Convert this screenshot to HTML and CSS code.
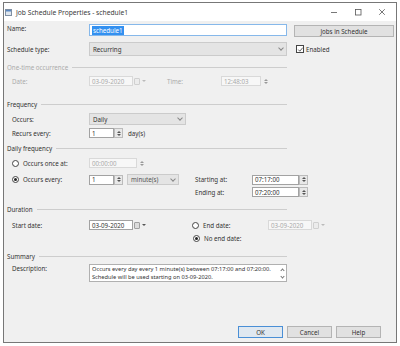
FILE: index.html
```html
<!DOCTYPE html>
<html lang="en">
<head>
    <meta charset="UTF-8">
    <title>Job Schedule Properties - schedule1</title>
    <link rel="stylesheet" href="styles.css">
</head>
<body>
    <div class="window">
        <div class="titlebar">
            <svg class="app-icon" width="7" height="7" viewBox="0 0 7 7">
                <rect x="0.5" y="0.5" width="6" height="6" fill="#dfe6ee" stroke="#7f8fa3"/>
                <rect x="1" y="1" width="5" height="1.5" fill="#5b87c0"/>
            </svg>
            <span class="title">Job Schedule Properties - schedule1</span>
            <div class="controls">
                <span class="ctl"><svg width="8" height="8" viewBox="0 0 8 8"><path d="M1 4.5h6" stroke="#555" stroke-width="0.8"/></svg></span>
                <span class="ctl"><svg width="8" height="8" viewBox="0 0 8 8"><rect x="1.5" y="1.5" width="5.5" height="5.5" fill="none" stroke="#555" stroke-width="0.8"/></svg></span>
                <span class="ctl"><svg width="8" height="8" viewBox="0 0 8 8"><path d="M1.2 1.2l5.6 5.6M6.8 1.2l-5.6 5.6" stroke="#555" stroke-width="0.8"/></svg></span>
            </div>
        </div>

        <div class="content">
            <div class="row r-name">
                <span class="lbl">Name:</span>
                <div class="tb name-box"><span class="selected">schedule1</span></div>
                <button class="btn jobs-btn">Jobs in Schedule</button>
            </div>

            <div class="row r-type">
                <span class="lbl">Schedule type:</span>
                <div class="combo type-combo">Recurring<span class="chev"></span></div>
                <span class="check"><svg width="7" height="7" viewBox="0 0 7 7"><path d="M1.3 3.6l1.5 1.6 3-3.6" fill="none" stroke="#333" stroke-width="0.8"/></svg></span>
                <span>Enabled</span>
            </div>

            <!-- One-time occurrence (disabled) -->
            <div class="head h-once off">One-time occurrence<span class="rule"></span></div>
            <div class="row ind r-date off">
                <span class="lbl">Date:</span>
                <div class="datepick">
                    <div class="tb dis date-box">03-09-2020</div>
                    <span class="cal"></span><span class="tri"></span>
                </div>
                <span class="time-lbl">Time:</span>
                <div class="tb dis time-box">12:48:03</div>
                <span class="spin flat"></span>
            </div>

            <!-- Frequency -->
            <div class="head h-freq">Frequency<span class="rule"></span></div>
            <div class="row ind r-occurs">
                <span class="lbl">Occurs:</span>
                <div class="combo occurs-combo">Daily<span class="chev"></span></div>
            </div>
            <div class="row ind r-recurs">
                <span class="lbl">Recurs every:</span>
                <div class="tb num-box">1</div><span class="spin"></span>
                <span class="unit">day(s)</span>
            </div>

            <!-- Daily frequency -->
            <div class="head h-daily">Daily frequency<span class="rule"></span></div>
            <div class="row ind r-once">
                <span class="lbl"><span class="radio"></span>Occurs once at:</span>
                <div class="tb dis once-box">00:00:00</div>
                <span class="spin flat"></span>
            </div>
            <div class="row ind r-every">
                <span class="lbl"><span class="radio on"></span>Occurs every:</span>
                <div class="tb num-box">1</div><span class="spin"></span>
                <div class="combo unit-combo">minute(s)<span class="chev"></span></div>
                <span class="side-lbl start-lbl">Starting at:</span>
                <div class="tb time-in">07:17:00</div><span class="spin"></span>
            </div>
            <div class="row r-ending">
                <span class="side-lbl">Ending at:</span>
                <div class="tb time-in">07:20:00</div><span class="spin"></span>
            </div>

            <!-- Duration -->
            <div class="head h-dur">Duration<span class="rule"></span></div>
            <div class="row ind r-start">
                <span class="lbl">Start date:</span>
                <div class="datepick">
                    <div class="tb date-box">03-09-2020</div>
                    <span class="cal"></span><span class="tri"></span>
                </div>
                <span class="end-lbl"><span class="radio"></span>End date:</span>
                <div class="datepick off">
                    <div class="tb dis date-box">03-09-2020</div>
                    <span class="cal"></span><span class="tri"></span>
                </div>
            </div>
            <div class="row r-noend">
                <span class="radio on"></span>No end date:
            </div>

            <!-- Summary -->
            <div class="head h-sum">Summary<span class="rule"></span></div>
            <div class="row ind r-desc">
                <span class="lbl">Description:</span>
                <div class="desc">
                    <div class="desc-text">
                        <div>Occurs every day every 1 minute(s) between 07:17:00 and 07:20:00.</div>
                        <div>Schedule will be used starting on 03-09-2020.</div>
                    </div>
                    <div class="scroll"><span class="up"></span><span class="down"></span></div>
                </div>
            </div>

            <div class="row r-buttons">
                <button class="btn ok">OK</button>
                <button class="btn">Cancel</button>
                <button class="btn">Help</button>
            </div>
        </div>
    </div>
</body>
</html>
```

FILE: styles.css
```css
body {
    margin: 0;
    background: #fff;
    font-family: "Noto Sans", "Open Sans", sans-serif;
    font-size: 6.2px;
    color: #333;
}
.window {
    margin: 2px 0 0 3px;
    width: 392px;
    height: 339px;
    border: 1px solid #777;
    background: #f0f0f0;
    display: flex;
    flex-direction: column;
}
.titlebar {
    height: 18px;
    flex: none;
    background: #fff;
    display: flex;
    align-items: center;
    padding: 0 2px 0 1px;
}
.app-icon {
    margin-right: 4px;
}
.title {
    font-size: 6.7px;
    color: #3a3a3a;
}
.controls {
    margin-left: auto;
    display: flex;
}
.ctl {
    width: 24px;
    display: flex;
    justify-content: center;
}
.content {
    flex: 1;
    display: flex;
    flex-direction: column;
    padding-left: 3px;
}

/* rows */
.row {
    display: flex;
    align-items: center;
    flex: none;
}
.ind {
    padding-left: 5px;
}
.lbl {
    width: 82px;
    flex: none;
    display: flex;
    align-items: center;
}
.ind .lbl {
    width: 77px;
}
.r-name { margin-top: 3px; height: 13px; align-items: flex-start; }
.r-type { margin-top: 5px; height: 14px; }
.h-once { margin-top: 7px; height: 9px; width: 373px; }
.r-date { margin-top: 4px; height: 10px; }
.h-freq { margin-top: 14px; height: 9px; }
.r-occurs { margin-top: 4px; height: 12px; }
.r-recurs { margin-top: 3px; height: 10px; }
.h-daily { margin-top: 6px; height: 9px; }
.r-once { margin-top: 5px; height: 10px; }
.r-every { margin-top: 6px; height: 11px; }
.r-ending { margin-top: 2px; height: 10px; padding-left: 188px; }
.h-dur { margin-top: 8px; height: 9px; }
.r-start { margin-top: 6px; height: 10px; }
.r-noend { margin-top: 3px; height: 10px; padding-left: 186px; }
.h-sum { margin-top: 9px; height: 9px; }
.r-desc { margin-top: 3px; height: 18px; align-items: flex-start; }
.r-buttons {
    margin-top: 44px;
    height: 12px;
    justify-content: flex-end;
    gap: 4px;
    padding-right: 15px;
}

/* group headings */
.head {
    display: flex;
    align-items: center;
    width: 280px;
    flex: none;
}
.rule {
    flex: 1;
    height: 1px;
    margin-left: 4px;
    background: #cdcdcd;
}
.off, .off .lbl {
    color: #ababab;
}

/* controls */
.tb {
    box-sizing: border-box;
    height: 10px;
    background: #fff;
    border: 1px solid #a2a2a2;
    padding-left: 2px;
    display: flex;
    align-items: center;
    flex: none;
}
.tb.dis {
    border-color: #d9d9d9;
    color: #aaa;
    background: #f7f7f7;
}
.name-box {
    width: 198px;
    height: 12px;
    border-color: #86b8ea;
}
.selected {
    background: #3390f0;
    color: #fff;
    padding: 0 1px;
}
.btn {
    box-sizing: border-box;
    width: 45px;
    height: 12px;
    border: 1px solid #b4b4b4;
    background: #e1e1e1;
    font: inherit;
    color: #333;
    padding: 0;
}
.btn.ok {
    border-color: #4a8fd6;
    background: #e0e8f0;
}
.jobs-btn {
    width: 100px;
    margin: 1px 0 0 7px;
}
.combo {
    box-sizing: border-box;
    height: 14px;
    background: #e4e4e4;
    border: 1px solid #cbcbcb;
    padding-left: 3px;
    display: flex;
    align-items: center;
    flex: none;
}
.chev {
    margin-left: auto;
    margin-right: 3px;
    width: 3px;
    height: 3px;
    border-right: 1px solid #888;
    border-bottom: 1px solid #888;
    transform: translateY(-1px) rotate(45deg);
}
.type-combo { width: 198px; }
.occurs-combo { width: 97px; height: 12px; }
.unit-combo { width: 52px; height: 11px; margin-left: 4px; color: #555; }
.check {
    box-sizing: border-box;
    width: 8px;
    height: 8px;
    border: 1px solid #444;
    background: #fff;
    margin: 0 2px 0 9px;
    display: flex;
}
.check svg {
    margin: -0.5px;
}

/* spinners */
.spin {
    box-sizing: border-box;
    width: 9px;
    height: 10px;
    border: 1px solid #bbb;
    background: #e8e8e8;
    display: flex;
    flex-direction: column;
    align-items: center;
    justify-content: center;
    gap: 1px;
    flex: none;
}
.spin::before, .spin::after {
    content: "";
    border-left: 2px solid transparent;
    border-right: 2px solid transparent;
}
.spin::before { border-bottom: 2px solid #555; }
.spin::after { border-top: 2px solid #555; }
.spin.flat {
    border: none;
    background: none;
    width: 10px;
}
.spin.flat::before { border-bottom-color: #999; }
.spin.flat::after { border-top-color: #999; }

.num-box { width: 25px; }
.unit { margin-left: 5px; }
.time-lbl { width: 54px; margin-left: 21px; flex: none; }
.time-box { width: 40px; }
.once-box { width: 48px; }
.side-lbl { width: 57px; flex: none; }
.start-lbl { margin-left: 16px; }
.time-in { width: 47px; }

/* date pickers */
.datepick {
    display: flex;
    align-items: center;
    flex: none;
}
.date-box { width: 44px; }
.cal {
    box-sizing: border-box;
    width: 6px;
    height: 7px;
    border: 1px solid #a0a0a0;
    border-radius: 1px;
    background: #dcdcdc;
    margin-left: 1px;
}
.off .cal {
    border-color: #d0d0d0;
    background: #ececec;
}
.tri {
    margin: 0 0 0 2px;
    border-left: 2px solid transparent;
    border-right: 2px solid transparent;
    border-top: 2px solid #555;
}
.off .tri {
    border-top-color: #bbb;
}
.end-lbl {
    width: 76px;
    margin-left: 46px;
    display: flex;
    align-items: center;
    flex: none;
}

/* radio buttons */
.radio {
    box-sizing: border-box;
    width: 7px;
    height: 7px;
    border-radius: 50%;
    border: 1px solid #444;
    background: #fff;
    margin-right: 4px;
    display: flex;
    align-items: center;
    justify-content: center;
    flex: none;
}
.radio.on::after {
    content: "";
    width: 3px;
    height: 3px;
    border-radius: 50%;
    background: #222;
}

/* description box */
.desc {
    box-sizing: border-box;
    width: 198px;
    height: 18px;
    background: #fff;
    border: 1px solid #b0b0b0;
    display: flex;
    flex: none;
}
.desc-text {
    flex: 1;
    padding: 1px 0 0 2px;
    font-size: 5.7px;
    line-height: 7.5px;
    white-space: nowrap;
    overflow: hidden;
}
.scroll {
    width: 8px;
    display: flex;
    flex-direction: column;
    align-items: center;
    justify-content: space-around;
}
.scroll span {
    width: 2px;
    height: 2px;
    border-left: 1px solid #777;
    border-top: 1px solid #777;
}
.scroll .up { transform: translateY(1px) rotate(45deg); }
.scroll .down { transform: translateY(-1px) rotate(225deg); }
```
